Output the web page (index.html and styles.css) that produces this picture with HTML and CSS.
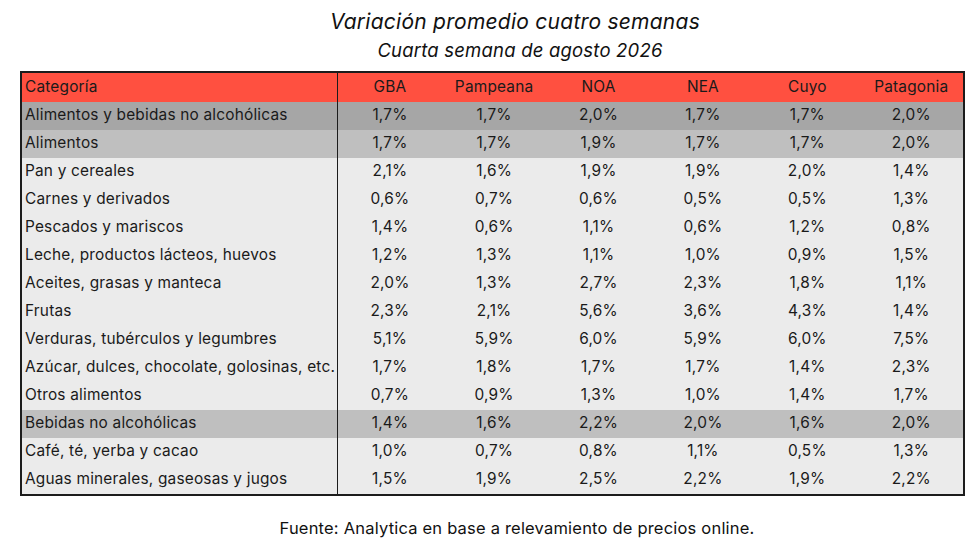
FILE: index.html
```html
<!DOCTYPE html>
<html lang="es">
<head>
<meta charset="utf-8">
<link rel="stylesheet" href="styles.css">
</head>
<body>
<div class="page">
  <h1 class="title">Variación promedio cuatro semanas</h1>
  <h2 class="subtitle">Cuarta semana de agosto 2026</h2>
  <table class="grid">
    <thead>
      <tr class="head"><th class="cat">Categoría</th><th>GBA</th><th>Pampeana</th><th>NOA</th><th>NEA</th><th>Cuyo</th><th>Patagonia</th></tr>
    </thead>
    <tbody>
      <tr class="lvl1"><td class="cat">Alimentos y bebidas no alcohólicas</td><td>1,7%</td><td>1,7%</td><td>2,0%</td><td>1,7%</td><td>1,7%</td><td>2,0%</td></tr>
      <tr class="lvl2"><td class="cat">Alimentos</td><td>1,7%</td><td>1,7%</td><td>1,9%</td><td>1,7%</td><td>1,7%</td><td>2,0%</td></tr>
      <tr class="lvl3"><td class="cat">Pan y cereales</td><td>2,1%</td><td>1,6%</td><td>1,9%</td><td>1,9%</td><td>2,0%</td><td>1,4%</td></tr>
      <tr class="lvl3"><td class="cat">Carnes y derivados</td><td>0,6%</td><td>0,7%</td><td>0,6%</td><td>0,5%</td><td>0,5%</td><td>1,3%</td></tr>
      <tr class="lvl3"><td class="cat">Pescados y mariscos</td><td>1,4%</td><td>0,6%</td><td>1,1%</td><td>0,6%</td><td>1,2%</td><td>0,8%</td></tr>
      <tr class="lvl3"><td class="cat">Leche, productos lácteos, huevos</td><td>1,2%</td><td>1,3%</td><td>1,1%</td><td>1,0%</td><td>0,9%</td><td>1,5%</td></tr>
      <tr class="lvl3"><td class="cat">Aceites, grasas y manteca</td><td>2,0%</td><td>1,3%</td><td>2,7%</td><td>2,3%</td><td>1,8%</td><td>1,1%</td></tr>
      <tr class="lvl3"><td class="cat">Frutas</td><td>2,3%</td><td>2,1%</td><td>5,6%</td><td>3,6%</td><td>4,3%</td><td>1,4%</td></tr>
      <tr class="lvl3"><td class="cat">Verduras, tubérculos y legumbres</td><td>5,1%</td><td>5,9%</td><td>6,0%</td><td>5,9%</td><td>6,0%</td><td>7,5%</td></tr>
      <tr class="lvl3"><td class="cat">Azúcar, dulces, chocolate, golosinas, etc.</td><td>1,7%</td><td>1,8%</td><td>1,7%</td><td>1,7%</td><td>1,4%</td><td>2,3%</td></tr>
      <tr class="lvl3"><td class="cat">Otros alimentos</td><td>0,7%</td><td>0,9%</td><td>1,3%</td><td>1,0%</td><td>1,4%</td><td>1,7%</td></tr>
      <tr class="lvl2"><td class="cat">Bebidas no alcohólicas</td><td>1,4%</td><td>1,6%</td><td>2,2%</td><td>2,0%</td><td>1,6%</td><td>2,0%</td></tr>
      <tr class="lvl3"><td class="cat">Café, té, yerba y cacao</td><td>1,0%</td><td>0,7%</td><td>0,8%</td><td>1,1%</td><td>0,5%</td><td>1,3%</td></tr>
      <tr class="lvl3"><td class="cat">Aguas minerales, gaseosas y jugos</td><td>1,5%</td><td>1,9%</td><td>2,5%</td><td>2,2%</td><td>1,9%</td><td>2,2%</td></tr>
    </tbody>
  </table>
  <p class="source">Fuente: Analytica en base a relevamiento de precios online.</p>
</div>
</body>
</html>
```
FILE: styles.css
```css
html, body {
  margin: 0;
  padding: 0;
  background: #ffffff;
}
.page {
  width: 978px;
  height: 546px;
  font-family: "Inter", "Open Sans", sans-serif;
  color: #1a1a1a;
}
.title {
  margin: 0;
  padding: 9px 0 0 52px;
  height: 26px;
  font-size: 21px;
  letter-spacing: 0.25px;
  line-height: 26px;
  font-weight: 400;
  font-style: italic;
  text-align: center;
  color: #111;
}
.subtitle {
  margin: 0;
  padding: 2px 0 0 62px;
  height: 34px;
  font-size: 18.5px;
  letter-spacing: 0.2px;
  line-height: 26px;
  font-weight: 400;
  font-style: italic;
  text-align: center;
  color: #111;
}
.grid {
  margin-left: 20px;
  width: 945px;
  border-collapse: collapse;
  border: 2px solid #1c1c1c;
  table-layout: fixed;
  font-size: 15.4px;
  letter-spacing: 0.2px;
}
.grid th, .grid td {
  padding: 0 0 2px 0;
  font-weight: 400;
  text-align: center;
  line-height: 26px;
  white-space: nowrap;
}
.grid th.cat, .grid td.cat {
  width: 312px;
  text-align: left;
  padding-left: 3px;
  border-right: 1px solid #1c1c1c;
}
.head th {
  background: #ff5040;
  line-height: 27px;
}
.lvl1 td { background: #a6a6a6; }
.lvl2 td { background: #bfbfbf; }
.lvl3 td { background: #ebebeb; }
.source {
  margin: 0;
  padding: 22px 0 0 56px;
  font-size: 16.5px;
  letter-spacing: 0.2px;
  text-align: center;
  color: #111;
}
```
